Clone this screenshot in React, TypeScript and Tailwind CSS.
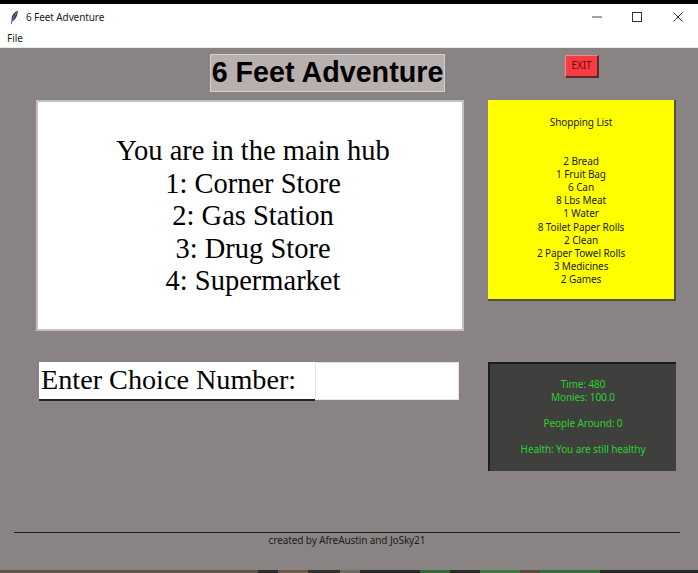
const shoppingList = [
  "2 Bread",
  "1 Fruit Bag",
  "6 Can",
  "8 Lbs Meat",
  "1 Water",
  "8 Toilet Paper Rolls",
  "2 Clean",
  "2 Paper Towel Rolls",
  "3 Medicines",
  "2 Games",
]

const hubOptions = ["You are in the main hub", "1: Corner Store", "2: Gas Station", "3: Drug Store", "4: Supermarket"]

// sliver of the desktop showing under the window
const desktopStrip = [
  { color: "#5e5548", width: 258 },
  { color: "#2f2d2a", width: 20 },
  { color: "#6b5a4c", width: 30 },
  { color: "#34322f", width: 32 },
  { color: "#6e6a64", width: 20 },
  { color: "#2a2a28", width: 60 },
  { color: "#2f6b35", width: 30 },
  { color: "#2b2b28", width: 30 },
  { color: "#3c7a42", width: 40 },
  { color: "#5a4a38", width: 20 },
  { color: "#2f7038", width: 60 },
  { color: "#2a2a28", width: 98 },
]

const uiFont = "font-['Noto_Sans','Open_Sans',sans-serif]"

export default function App() {
  return (
    <div className={`flex h-[573px] w-[698px] flex-col overflow-hidden bg-[#8a8383] ${uiFont}`}>
      <div className="h-1 shrink-0 bg-black" />

      <header className="flex h-[26px] shrink-0 items-center bg-white pl-[10px] text-[10px] tracking-[-0.1px] text-[#222]">
        <svg width="9" height="15" viewBox="0 0 10 16" className="mr-[7px]">
          <path d="M9 0.5C5 1.5 2 5 1.8 9.5L1.6 12L0.8 15.5L1.6 15.6L2.5 12.3C6 11 8.3 6 9 0.5Z" fill="#2b3f5c" />
          <path d="M8 2C6 4 4.2 7 3 11" stroke="#8fa6c4" strokeWidth="0.8" fill="none" />
        </svg>
        <span>6 Feet Adventure</span>
        <div className="ml-auto flex items-center">
          <svg width="10" height="10" viewBox="0 0 10 10" className="mr-[30px]">
            <path d="M0 5H10" stroke="#444" strokeWidth="1" />
          </svg>
          <svg width="10" height="10" viewBox="0 0 10 10" className="mr-[31px]">
            <rect x="0.5" y="0.5" width="9" height="9" fill="none" stroke="#333" strokeWidth="1" />
          </svg>
          <svg width="10" height="10" viewBox="0 0 10 10" className="mr-[15px]">
            <path d="M0.5 0.5L9.5 9.5M9.5 0.5L0.5 9.5" stroke="#333" strokeWidth="1" />
          </svg>
        </div>
      </header>

      <nav className="flex h-[18px] shrink-0 items-center border-b border-[#e8e8e8] bg-white pl-[7px] text-[10px] text-[#222]">
        File
      </nav>

      <main className="flex min-h-0 flex-1 flex-col">
        <div className="flex flex-1">
          <div className="ml-[36px] flex w-[428px] shrink-0 flex-col">
            <h1 className="mt-[6px] ml-[174px] flex h-[38px] w-[235px] shrink-0 items-center justify-center self-start whitespace-nowrap border border-[#d5d0d0] bg-[#b8afaf] pb-[1px] font-['Liberation_Sans',sans-serif] text-[28.7px] font-bold text-black">
              6 Feet Adventure
            </h1>

            <section className="mt-[8px] flex h-[231px] flex-col items-center justify-center border-2 border-[#c4c0c0] bg-white pt-[2px] pl-[6px] font-['Liberation_Serif',serif] text-[28.5px] leading-[32.4px] text-black">
              {hubOptions.map((line) => (
                <div key={line}>{line}</div>
              ))}
            </section>

            <div className="mt-[31px] ml-[3px] flex h-[39px] items-stretch">
              <label className="flex w-[276px] items-center border-b-2 border-[#222] bg-white pl-[2px] font-['Liberation_Serif',serif] text-[28.2px] text-black">
                Enter Choice Number:
              </label>
              <input className="h-[38px] w-[144px] border border-[#e4e4e4] bg-white" />
            </div>
          </div>

          <aside className="ml-[24px] flex w-[188px] flex-col text-center text-[10px] leading-[13.1px] tracking-[-0.1px]">
            <button className="mt-[7px] ml-[77px] flex h-[23px] w-[34px] items-center justify-center border border-b-2 border-r-2 border-t-[#f08a8a] border-l-[#f08a8a] border-b-[#5c2a2a] border-r-[#5c2a2a] bg-[#f53c44] text-[#7a0a10]">
              EXIT
            </button>

            <section className="mt-[22px] h-[201px] w-[188px] border-r-2 border-b-2 border-[#55512a] bg-[#ffff00] pt-[16px] text-[#222]">
              <p>Shopping List</p>
              <ul className="mt-[26px]">
                {shoppingList.map((item) => (
                  <li key={item}>{item}</li>
                ))}
              </ul>
            </section>

            <section className="mt-[61px] flex h-[109px] w-[188px] flex-col items-center border-t-2 border-l-2 border-[#1d1d1d] bg-[#3f403e] pt-[14px] text-[#2bd02b]">
              <p>Time: 480</p>
              <p>Monies: 100.0</p>
              <p className="mt-[13px]">People Around: 0</p>
              <p className="mt-[13px]">Health: You are still healthy</p>
            </section>
          </aside>
        </div>

        <footer className="mr-[18px] mb-[22px] ml-[14px] border-t border-[#1d1a1a] text-center text-[10px] tracking-[-0.1px] text-[#1c1c1c]">
          created by AfreAustin and JoSky21
        </footer>
      </main>

      <div className="flex h-[3px] shrink-0">
        {desktopStrip.map((part, i) => (
          <div key={i} className="h-full" style={{ backgroundColor: part.color, width: part.width }} />
        ))}
      </div>
    </div>
  )
}
